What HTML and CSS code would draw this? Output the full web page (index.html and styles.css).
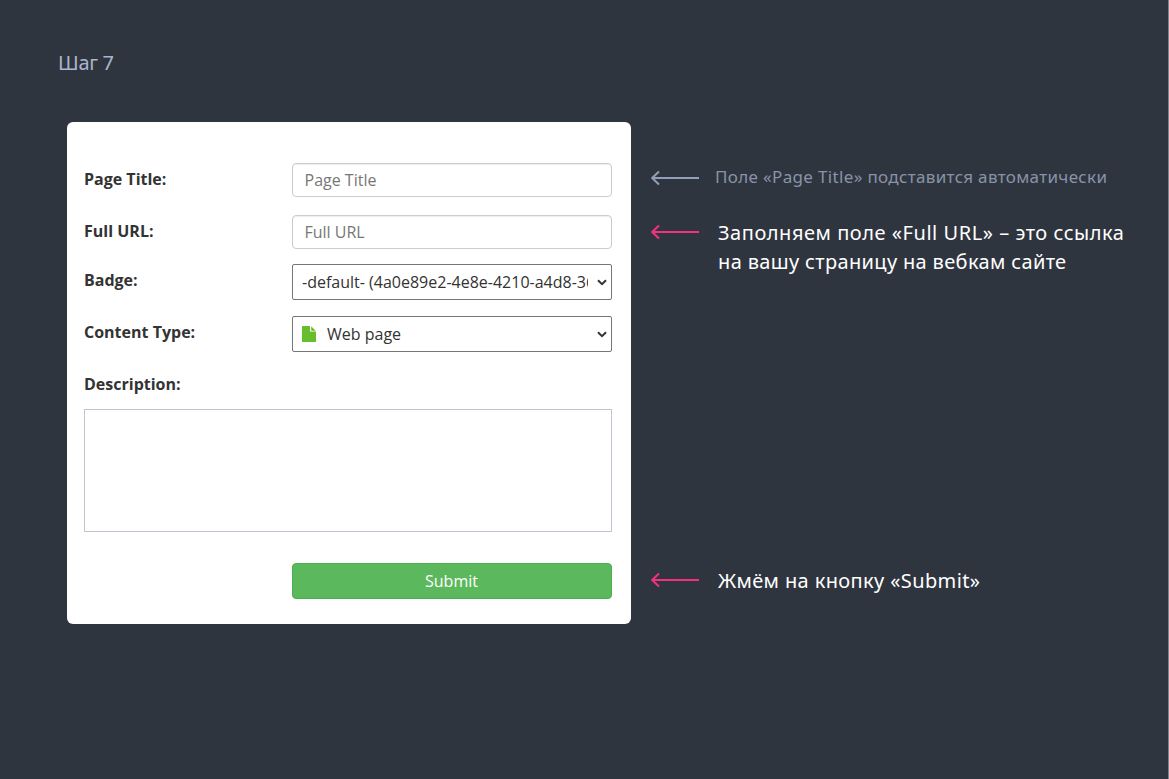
FILE: index.html
```html
<!DOCTYPE html>
<html lang="ru">
<head>
<meta charset="utf-8">
<title>Шаг 7</title>
<link rel="stylesheet" href="styles.css">
</head>
<body>
<main class="page">
  <h1 class="step">Шаг 7</h1>
  <div class="layout">
    <form class="card">
      <div class="row"><label class="label" for="title">Page Title:</label><input class="input" id="title" type="text" placeholder="Page Title"></div>
      <div class="row"><label class="label" for="url">Full URL:</label><input class="input" id="url" type="text" placeholder="Full URL"></div>
      <div class="row row-select"><span class="label">Badge:</span>
        <div class="select"><span class="value">-default- (4a0e89e2-4e8e-4210-a4d8-36</span>
          <svg class="chevron" viewBox="0 0 10 7" width="10" height="7"><path d="M1 1.2 5 5.2 9 1.2"/></svg></div></div>
      <div class="row row-select"><span class="label">Content Type:</span>
        <div class="select">
          <svg class="file" viewBox="0 0 14 16" width="14" height="16"><path d="M0 .5Q0 0 .5 0H8V5.5H14V15.5Q14 16 13.5 16H.5Q0 16 0 15.5Z"/><path d="M9.2 .2 13.7 4.7H9.2Z"/></svg>
          <span class="value">Web page</span>
          <svg class="chevron" viewBox="0 0 10 7" width="10" height="7"><path d="M1 1.2 5 5.2 9 1.2"/></svg></div></div>
      <label class="label description-label" for="description">Description:</label>
      <textarea class="description" id="description"></textarea>
      <button class="submit" type="button">Submit</button>
    </form>
    <aside class="notes">
      <div class="note note-muted">
        <svg class="arrow" viewBox="0 0 48 16" width="48" height="16"><path d="M1 8H48M8 1.5 1.2 8 8 14.5"/></svg>
        <p class="text">Поле «Page Title» подставится автоматически</p>
      </div>
      <div class="note note-url">
        <svg class="arrow" viewBox="0 0 48 16" width="48" height="16"><path d="M1 8H48M8 1.5 1.2 8 8 14.5"/></svg>
        <p class="text"><span class="line line-first">Заполняем поле «Full URL» – это ссылка</span><span class="line line-second">на вашу страницу на вебкам сайте</span></p>
      </div>
      <div class="note note-submit">
        <svg class="arrow" viewBox="0 0 48 16" width="48" height="16"><path d="M1 8H48M8 1.5 1.2 8 8 14.5"/></svg>
        <p class="text">Жмём на кнопку «Submit»</p>
      </div>
    </aside>
  </div>
</main>
</body>
</html>
```
FILE: styles.css
```css
* { box-sizing: border-box; }
body { margin: 0; background: #2f353f; font-family: "Open Sans", sans-serif; }
.page { height: 779px; overflow: hidden; padding: 48px 0 0 58px; border-right: 1px solid #7e828a; }
.step { margin: 0; height: 30px; font: 400 20px/30px "Noto Sans", sans-serif; letter-spacing: -0.3px; color: #a9b5cd; }
.layout { display: flex; gap: 20px; margin: 44px 0 0 9px; }
.card { width: 564px; height: 502px; padding: 41px 19px 0 17px; background: #fff; border-radius: 6px; color: #333; font-size: 16px; }
.row { display: grid; grid-template-columns: 208px 320px; height: 34px; margin-bottom: 18px; }
.row + .row-select { margin-top: -3px; }
.row-select { height: 36px; margin-bottom: 16px; }
.row-select + .row-select { margin-top: 0; }
.label { font-weight: 700; font-size: 16px; line-height: 32px; }
.input { width: 100%; height: 34px; padding: 0 11.5px; border: 1px solid #ccc; border-radius: 4px; background: #fff; box-shadow: inset 0 1px 1px rgba(0,0,0,.075); font: 400 16px "Open Sans", sans-serif; }
.input::placeholder { color: #777; opacity: 1; }
.select { display: flex; align-items: center; height: 36px; padding: 0 4px 0 9px; border: 1px solid #767676; border-radius: 2px; overflow: hidden; }
.value { flex: 1; min-width: 0; margin-right: 9px; overflow: hidden; white-space: nowrap; line-height: 24px; }
.chevron { flex: none; fill: none; stroke: #333; stroke-width: 2; }
.file { flex: none; margin-right: 11px; fill: #67bd2c; }
.description-label { display: block; }
.description { display: block; width: 528px; height: 123px; margin-top: 9px; border: 1px solid #bdc5d0; border-radius: 0; resize: none; }
.submit { display: block; width: 320px; height: 36px; margin: 31px 0 0 208px; padding: 0 7px 0 6px; border: 1px solid #4cae4c; border-radius: 4px; background: #5cb85c; color: #fff; font: 400 16px "Open Sans", sans-serif; }
.notes { width: 500px; padding-top: 42px; }
.note { display: flex; align-items: flex-start; color: #fff; }
.arrow { flex: none; margin-top: 6px; fill: none; stroke: #f5317f; stroke-width: 2; stroke-linecap: butt; }
.text { margin: 0 0 0 19px; font: 400 20px/29px "Noto Sans", sans-serif; letter-spacing: 0.38px; white-space: nowrap; }
.line { display: block; }
.line-first { letter-spacing: 0.54px; }
.line-second { letter-spacing: 0.35px; }
.note-muted { height: 54px; color: #8893a8; }
.note-muted .arrow { stroke: #929fb8; }
.note-muted .text { margin-left: 16px; font-size: 17px; line-height: 25px; letter-spacing: 0.34px; }
.note-url { height: 348px; }
```
